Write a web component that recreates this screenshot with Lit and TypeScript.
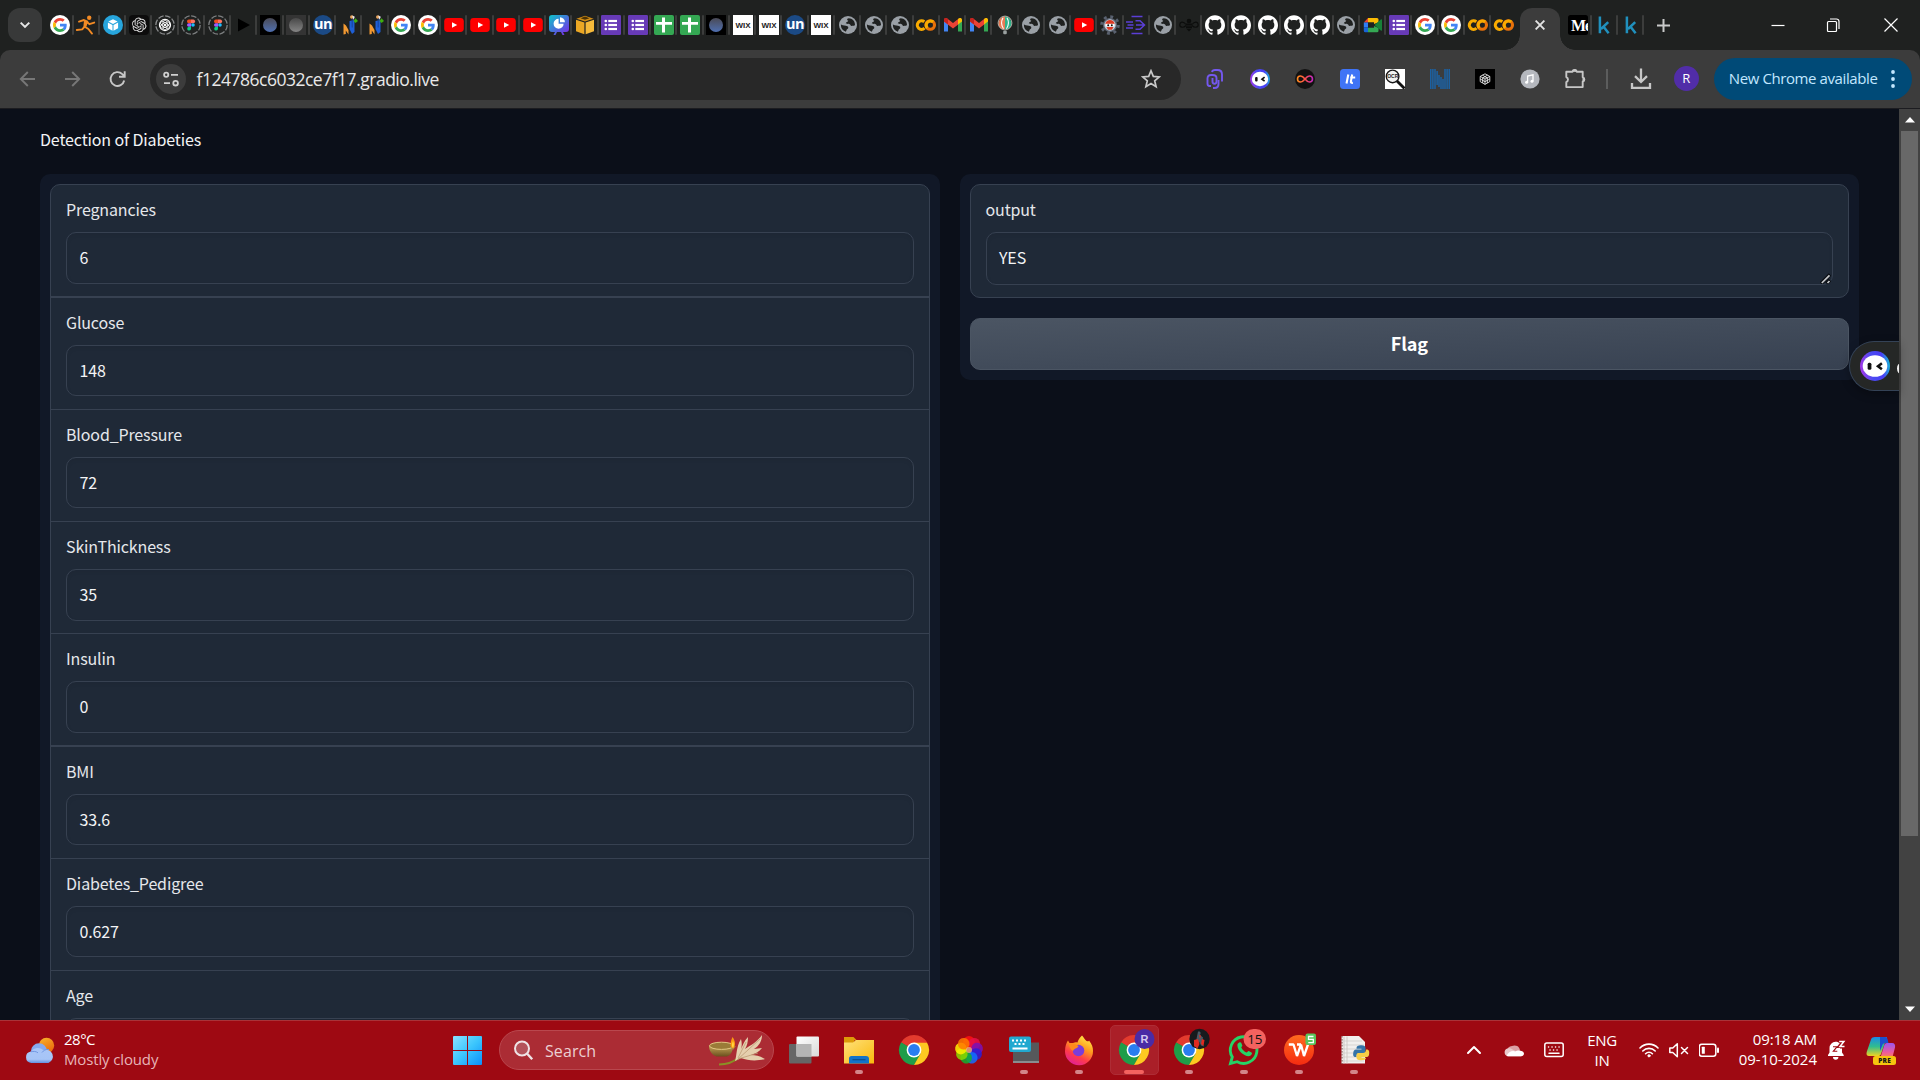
import { LitElement, html, svg, css, TemplateResult } from "lit";
import { customElement, property } from "lit/decorators.js";
import { classMap } from "lit/directives/class-map.js";

const OPENAI =
  "M22.2819 9.8211a5.9847 5.9847 0 0 0-.5157-4.9108 6.0462 6.0462 0 0 0-6.5098-2.9A6.0651 6.0651 0 0 0 4.9807 4.1818a5.9847 5.9847 0 0 0-3.9977 2.9 6.0462 6.0462 0 0 0 .7427 7.0966 5.98 5.98 0 0 0 .511 4.9107 6.051 6.051 0 0 0 6.5146 2.9001A5.9847 5.9847 0 0 0 13.2599 24a6.0557 6.0557 0 0 0 5.7718-4.2058 5.9894 5.9894 0 0 0 3.9977-2.9001 6.0557 6.0557 0 0 0-.7475-7.0729zm-9.022 12.6081a4.4755 4.4755 0 0 1-2.8764-1.0408l.1419-.0804 4.7783-2.7582a.7948.7948 0 0 0 .3927-.6813v-6.7369l2.02 1.1686a.071.071 0 0 1 .038.052v5.5826a4.504 4.504 0 0 1-4.4945 4.4944zm-9.6607-4.1254a4.4708 4.4708 0 0 1-.5346-3.0137l.142.0852 4.783 2.7582a.7712.7712 0 0 0 .7806 0l5.8428-3.3685v2.3324a.0804.0804 0 0 1-.0332.0615L9.74 19.9502a4.4992 4.4992 0 0 1-6.1408-1.6464zM2.3408 7.8956a4.485 4.485 0 0 1 2.3655-1.9728V11.6a.7664.7664 0 0 0 .3879.6765l5.8144 3.3543-2.0201 1.1685a.0757.0757 0 0 1-.071 0l-4.8303-2.7865A4.504 4.504 0 0 1 2.3408 7.872zm16.5963 3.8558L13.1038 8.364 15.1192 7.2a.0757.0757 0 0 1 .071 0l4.8303 2.7913a4.4944 4.4944 0 0 1-.6765 8.1042v-5.6772a.79.79 0 0 0-.407-.667zm2.0107-3.0231l-.142-.0852-4.7735-2.7818a.7759.7759 0 0 0-.7854 0L9.409 9.2297V6.8974a.0662.0662 0 0 1 .0284-.0615l4.8303-2.7866a4.4992 4.4992 0 0 1 6.6802 4.66zM8.3065 12.863l-2.02-1.1638a.0804.0804 0 0 1-.038-.0567V6.0742a4.4992 4.4992 0 0 1 7.3757-3.4537l-.142.0805L8.704 5.459a.7948.7948 0 0 0-.3927.6813zm1.0976-2.3654l2.602-1.4998 2.6069 1.4998v2.9994l-2.5974 1.4997-2.6067-1.4997Z";

const GITHUB =
  "M12 .297c-6.63 0-12 5.373-12 12 0 5.303 3.438 9.8 8.205 11.385.6.113.82-.258.82-.577 0-.285-.01-1.04-.015-2.04-3.338.724-4.042-1.61-4.042-1.61C4.422 18.07 3.633 17.7 3.633 17.7c-1.087-.744.084-.729.084-.729 1.205.084 1.838 1.236 1.838 1.236 1.07 1.835 2.809 1.305 3.495.998.108-.776.417-1.305.76-1.605-2.665-.3-5.466-1.332-5.466-5.93 0-1.31.465-2.38 1.235-3.22-.135-.303-.54-1.523.105-3.176 0 0 1.005-.322 3.3 1.23.96-.267 1.98-.399 3-.405 1.02.006 2.04.138 3 .405 2.28-1.552 3.285-1.23 3.285-1.23.645 1.653.24 2.873.12 3.176.765.84 1.23 1.91 1.23 3.22 0 4.61-2.805 5.625-5.475 5.92.42.36.81 1.096.81 2.22 0 1.606-.015 2.896-.015 3.286 0 .315.21.69.825.57C20.565 22.092 24 17.592 24 12.297c0-6.627-5.373-12-12-12";

const figma = svg`
  <circle cx="10" cy="10" r="9.2" fill="none" stroke="#7d7f80" stroke-width="1.3" stroke-dasharray="5.6 1.6"/>
  <path d="M7.8 4.6H10v3.6H7.8a1.8 1.8 0 0 1 0-3.6z" fill="#f24e1e"/>
  <path d="M10 4.6h2.3a1.8 1.8 0 0 1 0 3.6H10z" fill="#ff7262"/>
  <path d="M7.8 8.2H10v3.6H7.8a1.8 1.8 0 0 1 0-3.6z" fill="#a259ff"/>
  <circle cx="12" cy="10" r="1.8" fill="#1abcfe"/>
  <path d="M7.8 11.8H10v1.8a1.9 1.9 0 1 1-2.2-1.8z" fill="#0acf83"/>`;

const chromeBall = svg`
  <path d="M15 15 2 7.5A15 15 0 0 1 28 7.5z" fill="#e33b2e"/>
  <path d="M2 7.5A15 15 0 0 0 15 30l7-11z" fill="#1f9d49"/>
  <path d="M15 30A15 15 0 0 0 28 7.5H15l6.5 11.2z" fill="#fdc921"/>
  <path d="M2 7.5 8.5 18.8 15 15z" fill="#1f9d49"/>
  <path d="M15 7.5h13a15 15 0 0 0-2.2-3z" fill="#e33b2e"/>
  <circle cx="15" cy="15" r="7.4" fill="#fff"/>
  <circle cx="15" cy="15" r="5.9" fill="#2a7df0"/>`;

const botFace = svg`
  <defs>
    <linearGradient id="bot" x1="0" y1=".6" x2="1" y2=".5">
      <stop offset="0" stop-color="#a637e8"/><stop offset=".4" stop-color="#4a4bf2"/><stop offset=".75" stop-color="#4a3df5"/><stop offset="1" stop-color="#19b8dd"/>
    </linearGradient>
  </defs>
  <circle cx="10" cy="10" r="10" fill="url(#bot)"/>
  <ellipse cx="10" cy="10" rx="8.2" ry="7.2" fill="#fff"/>
  <rect x="5.1" y="7.9" width="2.5" height="4.6" rx="1" fill="#111"/>
  <path d="M14.6 8.2 12 10.2l2.6 2" fill="none" stroke="#111" stroke-width="1.7"/>`;

/* every favicon and extension glyph is drawn on a 20 x 20 board */
const glyphs: Record<string, TemplateResult> = {
  google: svg`<circle cx="10" cy="10" r="10" fill="#fff"/>
    <g transform="translate(3 3) scale(.2917)">
      <path fill="#EA4335" d="M24 9.5c3.54 0 6.71 1.22 9.21 3.6l6.85-6.85C35.9 2.38 30.47 0 24 0 14.62 0 6.51 5.38 2.56 13.22l7.98 6.19C12.43 13.72 17.74 9.5 24 9.5z"/>
      <path fill="#4285F4" d="M46.98 24.55c0-1.57-.15-3.09-.38-4.55H24v9.02h12.94c-.58 2.96-2.26 5.48-4.78 7.18l7.73 6c4.51-4.18 7.09-10.36 7.09-17.65z"/>
      <path fill="#FBBC05" d="M10.53 28.59c-.48-1.45-.76-2.99-.76-4.59s.27-3.14.76-4.59l-7.98-6.19C.92 16.46 0 20.12 0 24c0 3.88.92 7.54 2.56 10.78l7.97-6.19z"/>
      <path fill="#34A853" d="M24 48c6.48 0 11.93-2.13 15.89-5.81l-7.73-6c-2.15 1.45-4.92 2.3-8.16 2.3-6.26 0-11.57-4.22-13.47-9.91l-7.98 6.19C6.51 42.62 14.62 48 24 48z"/>
    </g>`,
  runner: svg`<circle cx="13.2" cy="2.8" r="2.2" fill="#f28a24"/>
    <path d="M3 6.6 8 5l3.4 1.6-2.6 5.2 3.6 2.2 3.6 4.6M11 6.8l2.4 2.4 4.8-1.6M8.6 11.6 6.2 14.4.8 15" fill="none" stroke="#f28a24" stroke-width="1.9" stroke-linecap="round" stroke-linejoin="round"/>
    <path d="m8 5.4 4 1.2-2.2 6.2-2.4-1.4z" fill="#f28a24"/>`,
  cube: svg`<circle cx="10" cy="10" r="10" fill="#27a5dc"/>
    <path d="m10 4.2 4.6 2.3L10 8.9 5.4 6.5z" fill="#fff"/><path d="M4.9 7.6 9.5 10v5.8L4.9 13.2zM15.1 7.6 10.5 10v5.8l4.6-2.6z" fill="#fff"/>`,
  openai: svg`<rect width="20" height="20" rx="4" fill="#0c0c0c"/><path transform="translate(2.8 2.6) scale(.61)" d=${OPENAI} fill="#dcdcdc"/>`,
  atom: svg`<circle cx="10" cy="10" r="9.2" fill="none" stroke="#8a8c8d" stroke-width="1.3" stroke-dasharray="5.6 1.6"/>
    <circle cx="10" cy="10" r="5.6" fill="#151515" stroke="#fff" stroke-width="1.1"/>
    <g fill="none" stroke="#fff" stroke-width=".9"><ellipse cx="10" cy="10" rx="5" ry="2.2" transform="rotate(30 10 10)"/><ellipse cx="10" cy="10" rx="5" ry="2.2" transform="rotate(90 10 10)"/><ellipse cx="10" cy="10" rx="5" ry="2.2" transform="rotate(150 10 10)"/></g>
    <circle cx="10" cy="10" r="1.2" fill="#fff"/>`,
  figma,
  play: svg`<path d="M4 3.500 16 10 4 16.500z" fill="#000"/>`,
  orbDark: svg`<defs><linearGradient id="orb" x2="0" y2="1"><stop stop-color="#4a4a55"/><stop offset="1" stop-color="#4f6fb0"/></linearGradient></defs>
    <rect width="20" height="20" fill="#000"/><circle cx="10" cy="10" r="7" fill="url(#orb)"/>`,
  orbGray: svg`<defs><linearGradient id="orbg" x2="0" y2="1"><stop stop-color="#484848"/><stop offset="1" stop-color="#858585"/></linearGradient></defs>
    <rect width="20" height="20" fill="#343434"/><circle cx="10" cy="10" r="7" fill="url(#orbg)"/>`,
  un: svg`<circle cx="10" cy="10" r="10" fill="#1b4a85"/><text class="un" x="10" y="13.8" text-anchor="middle">un</text>`,
  nn: svg`<path d="M4.5 8.5 7 10.500 9.500 15V19.500L6.800 15.500V19L4.500 19.500z" fill="#f39a32"/>
    <path d="M10.500 6 15.500 5v12l-2.500 2-2.500-5z" fill="#1e5fd6"/><path d="M13.200 3.500v9" stroke="#16439c" stroke-width="1"/>
    <circle cx="12.800" cy="2" r="1.800" fill="#e8a35c"/><path d="m13.200.6 2.600 1.200L14.500 5z" fill="#e9edf5"/><path d="m14.500 6 2-2.800L19 6l-2.500 2z" fill="#3fae10"/>`,
  youtube: svg`<rect x=".2" y="3" width="19.6" height="14" rx="3.4" fill="#fe0000"/><path d="m8 7.2 5.2 2.8L8 12.8z" fill="#fff"/>`,
  pie: svg`<defs><linearGradient id="pie" x2=".9" y2="1"><stop stop-color="#0cc5c9"/><stop offset="1" stop-color="#7a2ae8"/></linearGradient></defs>
    <path d="M3 0h14a3 3 0 0 1 3 3v11a3 3 0 0 1-3 3h-3l1.500 3h-2l-1.500-3H8l-1.500 3h-2L6 17H3a3 3 0 0 1-3-3V3a3 3 0 0 1 3-3z" fill="url(#pie)"/>
    <path d="M9.6 3.7a5 5 0 1 0 5 5h-5z" fill="#fff"/><path d="M11 2.200a5 5 0 0 1 4.900 5H11z" fill="#fff"/>`,
  box: svg`<path d="m10 .8 8.6 3L10 6.6 1.400 3.800z" fill="#d28d14"/><path d="M1 4.800 9.400 7.500v11.700L1 16.200z" fill="#eba724"/><path d="m19 4.800-8.400 2.700v11.700L19 16.200z" fill="#f5b93a"/><path d="m10 1.500 4.500 1.700L10 4.700 5.500 3.200z" fill="#4a3205"/>`,
  forms: svg`<rect width="20" height="20" rx="1.2" fill="#673ab7"/><g fill="#fff"><circle cx="4.8" cy="6" r="1.3"/><circle cx="4.8" cy="10" r="1.3"/><circle cx="4.8" cy="14" r="1.3"/><rect x="7.3" y="4.9" width="8.7" height="2.2"/><rect x="7.3" y="8.9" width="8.7" height="2.2"/><rect x="7.3" y="12.9" width="8.7" height="2.2"/></g>`,
  sheets: svg`<rect width="20" height="20" rx="2" fill="#34a853"/><path d="M8 2.500h3V7h7v2.800h-7v7.700H8V9.800H2V7h6z" fill="#fff"/>`,
  wix: svg`<rect width="20" height="20" fill="#fff"/><text class="wix" x="10" y="12.9" text-anchor="middle" textLength="15">WIX</text>`,
  globe: svg`<circle cx="10" cy="10" r="9" fill="#9aa0a6"/>
    <path d="M10.8 3.2c-2.500.2-1.600 2.300-.4 2.600-.6 1.200-2.400 1-2.600 2.800 1.600.8 4-.2 4.700 1.600.4 1.200 1.600.6 2.800.6 1 0 1.700-.2 1.700-1.600a7 7 0 0 0-6.200-6zM2.900 9.500a7.200 7.200 0 0 0 4.900 7.200c1-1 .4-2 1.600-2.600 1.200-.6 1.200-2.200 0-2.800C7.500 10.400 5.500 11 2.900 9.500z" fill="#1f2120"/>`,
  colab: svg`<g fill="none" stroke-width="3.1"><path d="M8.300 6.700a4.300 4.300 0 1 0 .2 6.500" stroke="#f9ab00"/><circle cx="14.200" cy="10" r="4.300" stroke="#e8710a"/><path d="M11.200 13a4.300 4.300 0 0 1 6-6.100" stroke="#f9ab00"/></g>`,
  gmail: svg`<path d="M1 5v11.500h4V9z" fill="#4285f4"/><path d="M15 9v7.500h4V5z" fill="#34a853"/><path d="M1 6.500V4.600C1 3 3 2.500 4.200 3.400L10 8l5.800-4.600V9L10 13.400z" fill="#ea4335"/><path d="m1 6.500 4 3.100V4L3.800 3.200C2.600 2.700 1 3.200 1 4.700z" fill="#c5221f"/><path d="m15 9.600 4-3.100V4.700c0-1.600-1.800-2.200-3-1.400L15 4z" fill="#fbbc04"/>`,
  balloon: svg`<path d="M10 1.500a6.700 6.700 0 0 0-3 12.500h3z" fill="#e97a54"/><path d="M10 1.500a6.700 6.700 0 0 1 3 12.500h-3z" fill="#2fb28a"/><path d="M8 2.800c-2 3.500-1.500 8 .5 11M12 2.800c2 3.500 1.500 8-.5 11" stroke="#fff" fill="none" stroke-width="1.1"/><circle cx="10" cy="8" r="6.900" fill="none" stroke="#d7d2c5" stroke-width=".8"/><rect x="8.200" y="15.500" width="3.600" height="3.800" rx="1.200" fill="#9aa1a0"/>`,
  gear: svg`<circle cx="10" cy="10" r="8.4" fill="none" stroke="#59616f" stroke-width="2.800" stroke-dasharray="2.900 3.700"/><circle cx="10" cy="10" r="6.400" fill="#c3ccd8" stroke="#59616f" stroke-width="1.400"/><path d="M5.500 8c1.500-4 7.500-4 9 0v1.500h-9zM6.500 12h7l-1.500 2.700H8z" fill="#dd3a24"/><path d="M5.500 8.800h9v2.700h-9z" fill="#fff"/><circle cx="8.200" cy="10.200" r="1" fill="#111"/><circle cx="11.800" cy="10.200" r="1" fill="#111"/>`,
  motion: svg`<g fill="none" stroke="#5b3fd6" stroke-width="1.5"><path d="M5.500 1.500h11M5.500 18.500h11M0 7h7M1.500 10h6M0 13h7M9.500 5.800H14l4.500 4.200-4.500 4.200H9.500M10 10h8"/></g>`,
  bee: svg`<g fill="none" stroke="#0c0d0c" stroke-width="1.2"><path d="M7 9.500C4 5.500.8 7 .8 9.800c0 3 3.700 3.200 6.200.7M13 9.500c3-4 6.200-2.500 6.200.3 0 3-3.700 3.200-6.200.7"/></g><g fill="#0c0d0c"><circle cx="10" cy="6" r="2.300"/><rect x="7" y="8.500" width="6" height="2"/><rect x="7" y="11.300" width="6" height="2"/><path d="M7.700 14h4.600L10 16.500z"/></g>`,
  github: svg`<path transform="scale(.8333)" d=${GITHUB} fill="#fff"/>`,
  meet: svg`<path d="M5 3v4.500H.8z" fill="#ea4335"/><path d="M5 3h9a1.500 1.500 0 0 1 1.500 1.500V7.200L11 9V7.300H5z" fill="#fbbc04"/><path d="M.8 7.500H5v5H.8z" fill="#2f7df6"/><path d="M.8 12.500H5v4.800H2.500A1.600 1.600 0 0 1 .8 15.800z" fill="#1765d8"/><path d="M5 12.700h6V11l4.500 2v2.800a1.500 1.500 0 0 1-1.500 1.500H5z" fill="#34a853"/><path d="m11.500 10 6.300-5.500c.6-.4 1.200-.2 1.200.5v10c0 .8-.6.9-1.200.5z" fill="#188038"/>`,
  medium: svg`<defs><clipPath id="mclip"><rect width="20" height="20" rx="2.5"/></clipPath></defs><g clip-path="url(#mclip)"><rect width="20" height="20" fill="#000"/><text class="medium" x="3" y="15.8">Me</text></g>`,
  kaggle: svg`<path d="M5.900 1.500v16.700M14.200 7.200 7 14M9.600 11.800l5 6.400" fill="none" stroke="#2090bd" stroke-width="2.5"/>`,
  clip: svg`<g fill="none" stroke="#7458ee" stroke-width="1.900"><path d="M6 17H4.500C3 17 2.500 16 2.500 14.500v-5C2.500 7 4 6 6 6h1.500c3 0 4 1 4 3v3.500c0 1.700-.8 2.200-2 2.200s-2-.6-2-2.200V9"/><path d="M7 3c.3-1.500 1-2 3-2h2.500C15.500 1 17 2.500 17 5.500v7M13.500 11v4c0 2.500-1.500 4-4 4H8"/></g>`,
  bot: botFace,
  infinity: svg`<defs><linearGradient id="inf"><stop stop-color="#ff8a1f"/><stop offset=".5" stop-color="#ff4f4a"/><stop offset="1" stop-color="#c327c0"/></linearGradient></defs><circle cx="10" cy="10" r="10" fill="#121212"/><path d="M10 10C8 7.500 7 7 5.500 7a3 3 0 0 0 0 6C7 13 8 12.500 10 10s3-3 4.500-3a3 3 0 0 1 0 6C13 13 12 12.500 10 10z" fill="none" stroke="url(#inf)" stroke-width="1.6"/>`,
  lt: svg`<rect width="20" height="20" rx="3.5" fill="#3f74f6"/><path d="M8.300 5.500 6.500 14.500M12.200 5.500l-1.300 6.800c-.2 1.400.5 1.700 2 1.500M10.200 8.500h5" fill="none" stroke="#fff" stroke-width="2.1"/>`,
  ocr: svg`<rect width="20" height="20" fill="#fff"/><circle cx="7.600" cy="7.400" r="6.300" fill="#f1f1f1" stroke="#161616" stroke-width="1.4"/><path d="m12 12 7.500 7.500" stroke="#111" stroke-width="2.8"/><text class="ocr" x="7.700" y="9.200" text-anchor="middle">OCR</text>`,
  nm: svg`<g stroke="#1668b5" stroke-width="1.3"><path d="M.8 0v20M2.900 0v20M5 0v20M15 0v20M17.100 0v20M19.200 0v20M7.100 2v14M9 6v12M11 8v12M13 10v10"/></g>`,
  cubes: svg`<rect width="20" height="20" fill="#000"/><g fill="none" stroke="#fff" stroke-width=".8"><path d="m10 4.800 4.800 2.600v5.200L10 15.400l-4.800-2.800V7.400zM5.200 7.400 10 10l4.800-2.600M10 10v5.400M7.500 6.200 12.300 9v5M12.500 6.200 7.700 9v5M5.200 10 10 12.600l4.800-2.600"/></g>`,
  music: svg`<circle cx="10" cy="10" r="9.6" fill="#b5b8be"/><path d="M7.600 13.200V7l5.400-1.200V12" fill="none" stroke="#fff" stroke-width="1.3"/><circle cx="6.600" cy="13.300" r="1.500" fill="#fff"/><circle cx="12" cy="12.200" r="1.500" fill="#fff"/>`,
  puzzle: svg`<path d="M1.300 2.700h6.200a2.200 2.200 0 0 1 4.300 0h5.900v5.500a2.300 2.300 0 0 1 0 4.400v5.500H1.300v-5a2.700 2.700 0 0 0 0-5z" fill="none" stroke="#c7c7c7" stroke-width="1.9" stroke-linejoin="round"/><path d="M7.600 2.300a2.100 2.100 0 0 1 4.100 0zM18 8.300a2.200 2.200 0 0 1 0 4.200z" fill="#c7c7c7" stroke="#c7c7c7"/>`,
};

const rep = (n: number, name: string) => Array<string>(n).fill(name);
const tabs = [
  "google", "runner", "cube", "openai", "atom", "figma", "figma", "play", "orbDark", "orbGray", "un", "nn", "nn",
  "google", "google", ...rep(4, "youtube"), "pie", "box", "forms", "forms", "sheets", "sheets", "orbDark",
  "wix", "wix", "un", "wix", ...rep(3, "globe"), "colab", "gmail", "gmail", "balloon", "globe", "globe", "youtube",
  "gear", "motion", "globe", "bee", ...rep(5, "github"), "globe", "meet", "forms", "google", "google", "colab", "colab",
];
const tabsAfter = ["medium", "kaggle", "kaggle"];
const extensions = ["clip", "bot", "infinity", "lt", "ocr", "nm", "cubes", "music", "puzzle"];

const icon = (name: string) => html`<svg class="glyph" viewBox="0 0 20 20">${glyphs[name]}</svg>`;

const glyphStyles = css`
  .glyph { display: block; width: 20px; height: 20px; flex: none; overflow: visible; }
  .un { font: 700 14.5px "Open Sans", sans-serif; fill: #fff; letter-spacing: -0.6px; }
  .wix { font: 700 8px "Liberation Sans", sans-serif; fill: #222; }
  .medium { font: 700 16px "Liberation Serif", serif; fill: #fff; letter-spacing: -1px; }
  .ocr { font: 700 5px "Liberation Sans", sans-serif; fill: #222; }
`;

@customElement("tab-strip")
class TabStrip extends LitElement {
  static styles = [glyphStyles, css`
    :host { display: flex; height: 50px; background: #1f2120; align-items: stretch; padding-left: 8px; box-sizing: border-box; }
    .menu { width: 34px; height: 34px; margin: 8px 8px 0 0; border-radius: 12px; background: #383939; display: grid; place-items: center; }
    .tabs { display: flex; align-items: center; }
    .tab { display: flex; align-items: center; width: 26.25px; height: 50px; }
    .tab::after { content: ""; width: 2px; height: 20px; margin-left: 1.5px; background: #3c3d3c; border-radius: 1px; }
    .last::after { visibility: hidden; }
    .active { position: relative; width: 40px; height: 42.5px; margin: 7.5px 8px 0 0; border-radius: 12px 12px 0 0; background: #3c3c3c; display: grid; place-items: center; padding-bottom: 7px; box-sizing: border-box; }
    .active::before, .active::after { content: ""; position: absolute; bottom: 0; width: 15px; height: 15px; }
    .active::before { right: 100%; background: radial-gradient(circle at 0 0, transparent 14.5px, #3c3c3c 15px); }
    .active::after { left: 100%; background: radial-gradient(circle at 100% 0, transparent 14.5px, #3c3c3c 15px); }
    .plus { margin: 18.5px 0 0 10px; width: 13px; height: 13px; }
    .controls { display: flex; margin-left: auto; align-items: center; height: 49px; }
    .controls svg { width: 58px; height: 14px; }
  `];
  render() {
    return html`
      <div class="menu"><svg width="12" height="12" viewBox="0 0 12 12"><path d="m1.700 3.600 4.300 4.300 4.300-4.300" fill="none" stroke="#e6e6e6" stroke-width="2"/></svg></div>
      <div class="tabs">${tabs.map((t, i) => html`<div class=${classMap({ tab: true, last: i === tabs.length - 1 })}>${icon(t)}</div>`)}</div>
      <div class="active"><svg width="10" height="10" viewBox="0 0 10 10"><path d="m.6.6 8.800 8.800M9.400.6.6 9.400" stroke="#e3e3e3" stroke-width="1.9"/></svg></div>
      <div class="tabs">${tabsAfter.map((t) => html`<div class="tab">${icon(t)}</div>`)}</div>
      <svg class="plus" viewBox="0 0 13 13"><path d="M6.500 0v13M0 6.500h13" stroke="#c9caca" stroke-width="2"/></svg>
      <div class="controls">
        <svg viewBox="0 0 58 14"><path d="M25.500 7.500h13" stroke="#fff" stroke-width="1.2"/></svg>
        <svg viewBox="0 0 58 14"><path d="M23.500 4.500a1 1 0 0 1 1-1h7a1 1 0 0 1 1 1v8a1 1 0 0 1-1 1h-7a1 1 0 0 1-1-1zM26 1h6.500a2.500 2.500 0 0 1 2.500 2.500V11" fill="none" stroke="#fff" stroke-width="1.2"/></svg>
        <svg viewBox="0 0 58 14"><path d="m22.500.5 13 13m0-13-13 13" stroke="#fff" stroke-width="1.2"/></svg>
      </div>`;
  }
}

@customElement("browser-toolbar")
class BrowserToolbar extends LitElement {
  static styles = [glyphStyles, css`
    :host { display: block; background: #1f2120; font-family: "Open Sans", "Noto Sans", sans-serif; }
    .bar { display: flex; align-items: center; height: 59px; box-sizing: border-box; padding: 0 8.5px 1px 17px; background: #3c3c3c; border-bottom: 1px solid #1c1c20; border-radius: 10px 10px 0 0; }
    .nav { display: flex; gap: 25px; width: 133px; }
    .nav svg { width: 20px; height: 20px; flex: none; }
    .omnibox { display: flex; align-items: center; width: 1031px; height: 42px; border-radius: 21px; background: #282828; box-sizing: border-box; padding: 0 20px 0 6px; }
    .site { width: 30px; height: 30px; border-radius: 50%; background: #3c3c3c; display: grid; place-items: center; margin-right: 10.5px; }
    .url { font-size: 17.5px; line-height: 26px; color: #e8e8e8; letter-spacing: -0.49px; flex: 1; }
    .ext { display: flex; gap: 25.1px; margin-left: 23.5px; }
    .rule { width: 2px; height: 20px; background: #5c5d5d; margin: 0 22px 0 21px; }
    .avatar { width: 25px; height: 25px; border-radius: 50%; background: #512da8; color: #fff; display: grid; place-items: center; font-size: 13px; margin: -1px 15px 0 21.5px; }
    .update { display: flex; align-items: center; justify-content: space-between; flex: 1; height: 42px; border-radius: 21px; background: #004a77; color: #c2e7ff; font-size: 15px; letter-spacing: -0.4px; padding: 0 17px 0 15px; box-sizing: border-box; white-space: nowrap; }
    .update span { margin-top: -2px; }
  `];
  render() {
    return html`<div class="bar">
      <div class="nav">
        <svg viewBox="0 0 20 20"><path d="M18 10H4.500M10.800 3 3.800 10l7 7" fill="none" stroke="#777" stroke-width="1.9"/></svg>
        <svg viewBox="0 0 20 20"><path d="M3 10h13.500M10.200 3l7 7-7 7" fill="none" stroke="#777" stroke-width="1.9"/></svg>
        <svg viewBox="0 0 20 20"><path d="M17.200 11.500a6.900 6.900 0 1 1-1.900-6.400l2.200 2.100M17.700 2.200v5.600H12" fill="none" stroke="#c8c8c8" stroke-width="1.9"/></svg>
      </div>
      <div class="omnibox">
        <div class="site"><svg width="18" height="18" viewBox="0 0 18 18" fill="none" stroke="#d0d0d0" stroke-width="1.8"><circle cx="4.200" cy="4.800" r="2.100"/><path d="M9 4.800h7M2 13.200h6"/><circle cx="13.600" cy="13.200" r="2.300"/></svg></div>
        <span class="url">f124786c6032ce7f17.gradio.live</span>
        <svg width="20" height="20" viewBox="0 0 20 20"><path d="m10 1.800 2.300 5.600 6 .5-4.600 3.900 1.400 5.900-5.100-3.200-5.100 3.200 1.400-5.900L1.700 7.900l6-.5z" fill="none" stroke="#c9c9c9" stroke-width="1.7"/></svg>
      </div>
      <div class="ext">${extensions.map(icon)}</div>
      <div class="rule"></div>
      <svg width="22" height="22" viewBox="0 0 22 22"><path d="M11 .5v13M5 8.200l6 5.800 6-5.800M2 15v4.800h18V15" fill="none" stroke="#c7c7c7" stroke-width="2.3"/></svg>
      <div class="avatar">R</div>
      <div class="update"><span>New Chrome available</span><svg width="4" height="20" viewBox="0 0 4 20" fill="#c2e7ff"><circle cx="2" cy="3" r="1.9"/><circle cx="2" cy="10" r="1.9"/><circle cx="2" cy="17" r="1.9"/></svg></div>
    </div>`;
  }
}

interface Field { label: string; value: string; line: number; box: number; }
const fields: Field[] = [
  { label: "Pregnancies", value: "6", line: 2, box: 52 },
  { label: "Glucose", value: "148", line: 1, box: 51 },
  { label: "Blood_Pressure", value: "72", line: 1, box: 51 },
  { label: "SkinThickness", value: "35", line: 1, box: 52 },
  { label: "Insulin", value: "0", line: 2, box: 52 },
  { label: "BMI", value: "33.6", line: 1, box: 51 },
  { label: "Diabetes_Pedigree", value: "0.627", line: 1, box: 51 },
  { label: "Age", value: "", line: 1, box: 51 },
];

@customElement("gradio-page")
class GradioPage extends LitElement {
  static styles = [glyphStyles, css`
    :host { display: flex; min-height: 0; background: #0b0f19; color: #f3f4f6; font-family: "Noto Sans CJK SC", "Noto Sans", sans-serif; font-size: 16px; letter-spacing: -0.14px; overflow: hidden; position: relative; }
    .content { flex: 1; padding: 18px 40px 0; min-width: 0; }
    .title { height: 24px; line-height: 24px; margin-bottom: 23px; }
    .columns { display: flex; gap: 20px; align-items: flex-start; }
    .panel { flex: 1 1 0; min-width: 0; background: #111827; border-radius: 10px; padding: 10px; box-sizing: border-box; }
    .group { border: 1px solid #374151; border-radius: 10px; background: #1f2937; overflow: hidden; }
    .field { height: 99px; padding: 12px 15px 0; border-bottom: 0 solid #374151; }
    .label { height: 24px; line-height: 24px; color: #e5e7eb; margin-bottom: 11px; }
    .input { border: 1px solid #374151; border-radius: 10px; box-sizing: border-box; padding: 0 13px 0 12.5px; line-height: 48px; box-shadow: inset 0 2px 4px rgba(0,0,0,.05); }
    .text { position: relative; height: 53px; }
    .grip { position: absolute; right: 1px; bottom: 0; }
    .output .field { height: 100px; }
    .flag { display: block; width: 100%; height: 52px; margin-top: 20px; border: 1px solid #4b5563; border-radius: 10px; background: linear-gradient(to bottom right, #4b5563, #374151); color: #fff; font: 700 18px "Noto Sans CJK SC", sans-serif; letter-spacing: -0.15px; padding: 0 0 2px; line-height: 48px; }
    .scroll { width: 21px; background: #424242; display: flex; flex-direction: column; align-items: center; box-sizing: border-box; justify-content: space-between; }
    .arrow { height: 22px; display: grid; place-items: center; }
    .thumb { width: 17px; height: 705px; background: #686868; margin-right: 1px; margin-bottom: auto; }
    .widget { position: absolute; right: 21px; top: 232px; width: 50px; height: 50px; box-sizing: border-box; border: 1px solid #344256; border-right: 0; border-radius: 25px 0 0 25px; background: #252726; display: flex; align-items: center; padding-left: 10px; overflow: hidden; color: #fff; box-shadow: 0 3px 10px rgba(0,0,0,.3); }
    .widget .glyph { width: 30px; height: 30px; }
    .dot { flex: none; width: 8px; height: 11px; box-sizing: border-box; border: 2px solid #eee; border-radius: 50%; margin: 4px 0 0 7px; }
  `];
  render() {
    return html`
      <div class="content">
        <div class="title">Detection of Diabeties</div>
        <div class="columns">
          <div class="panel"><div class="group">${fields.map((f) => html`
            <div class="field" style="border-bottom-width:${f.line}px">
              <div class="label">${f.label}</div>
              <div class="input" style="height:${f.box}px">${f.value}</div>
            </div>`)}</div></div>
          <div class="panel output">
            <div class="group"><div class="field">
              <div class="label">output</div>
              <div class="input text">YES<svg class="grip" width="11" height="11" viewBox="0 0 11 11"><path d="M1 10.500 10 1.500M6.500 10.500 10 7" stroke="#0a0d12" stroke-width="3.6"/><path d="m1.800 10 7.700-7.700M7.500 10l2-2" stroke="#c6c8cb" stroke-width="1.7"/></svg></div>
            </div></div>
            <button class="flag">Flag</button>
          </div>
        </div>
      </div>
      <div class="scroll">
        <div class="arrow"><svg width="10" height="6" viewBox="0 0 10 6"><path d="M5 0 10 5.500H0z" fill="#fff"/></svg></div>
        <div class="thumb"></div>
        <div class="arrow"><svg width="10" height="6" viewBox="0 0 10 6"><path d="M5 6 0 .5h10z" fill="#fff"/></svg></div>
      </div>
      <div class="widget">${icon("bot")}<span class="dot"></span></div>`;
  }
}

const petals = ["#ff1212", "#e8104a", "#7a10b8", "#2a1fd8", "#1070ff", "#10b030", "#8ad800", "#fff000", "#ff7a00"];

/* taskbar artwork uses a 30 x 30 board */
const apps: { art: TemplateResult; state: string }[] = [
  { state: "", art: svg`<defs><linearGradient id="tv" x2="1" y2="1"><stop stop-color="#fff"/><stop offset="1" stop-color="#d9d9d9"/></linearGradient></defs><rect x="0" y="9" width="22.5" height="19.5" rx="1" fill="#666"/><rect x="7.5" y="1.5" width="22.5" height="20" rx="1" fill="url(#tv)"/><path d="M7.500 9h15v12.500h-15z" fill="#b5b5b5"/>` },
  { state: "run", art: svg`<defs><linearGradient id="fo" x2="1" y2="1"><stop stop-color="#ffe17a"/><stop offset="1" stop-color="#f9b90d"/></linearGradient></defs><path d="M0 2h9.500L13 5.500h-3V9H0z" fill="#dd9a09"/><path d="M0 7.500h9L12 5h18v23.500H0z" fill="url(#fo)"/><path d="M7.500 21H22a3 3 0 0 1 3 3v4.500H5V23.500A2.500 2.500 0 0 1 7.500 21z" fill="#1273c8"/><path d="M8.500 24.700h13" stroke="#0b4d8d" stroke-width="1.2"/>` },
  { state: "", art: chromeBall },
  { state: "", art: svg`${petals.map((c, i) => svg`<circle cx="15" cy="6.800" r="5.800" fill=${c} opacity=".85" transform=${`rotate(${i * 40} 15 15)`}/>`)}<circle cx="15" cy="15" r="3" fill="#ffe9b0" opacity=".6"/>` },
  { state: "run", art: svg`<rect x="4" y="7.500" width="26" height="20.500" fill="#56585b"/><path d="M4 26h26v2H4z" fill="#8a8c8f"/><rect x="0" y="1.500" width="22" height="15.500" rx="2" fill="#22a9d0"/><g fill="#fff"><path d="M3 4.500h2v2H3zM7 4.500h2v2H7zM11 4.500h2v2h-2zM15 4.500h2v2h-2zM5.500 8h2v2h-2zM9.500 8h2v2h-2zM13.500 8h2v2h-2zM3.500 12.500H18.500v2H3.500z"/></g>` },
  { state: "run", art: svg`<defs><linearGradient id="ff" x1=".8" y1="0" x2=".3" y2="1"><stop stop-color="#fff04a"/><stop offset=".4" stop-color="#ff9a1e"/><stop offset=".7" stop-color="#ff3b4a"/><stop offset="1" stop-color="#e01f9a"/></linearGradient></defs><path d="M18 .5c2 2 2.500 4 4.500 5.500C25 7 25 5.500 25 5.500c3 4 4 6.500 4 10.500a14 14 0 0 1-28 .5C1 11 2.500 7.500 4 5.500L5.500 8h3.500c2-1 3-1 4.500-.5C14 5 15.500 3 18 .5z" fill="url(#ff)"/><circle cx="14.500" cy="15.500" r="5.800" fill="#7a3ddb"/><path d="M5 9c4-1 6 0 9.500 2-1 2.500-4 2-5.500 5-2.500-1.500-4-4-4-7z" fill="#ff8a1c"/>` },
  { state: "active", art: svg`${chromeBall}<circle cx="25.500" cy="4" r="10" fill="#4a2ba5"/><text class="badge-r" x="25.500" y="8" text-anchor="middle">R</text>` },
  { state: "run", art: svg`${chromeBall}<circle cx="25.500" cy="4" r="10.200" fill="#171a1d"/><path d="M24-3.500c3-.5 3 2 2 3.500l3 2.500-1 6 2 3-3-1-2-4-2 4-3 1 2-5 1-5z" fill="#4a5965"/><path d="m20 5 4-1 1.500 5-2 4.500-3.500-2.500zM28 4l2.500 1-1 6-2.500-2zM25 0l2 .5-1 3.500z" fill="#e02b20"/>` },
  { state: "run", art: svg`<path d="M3.300 22a13.300 13.300 0 1 1 4.900 4.700L1.500 28.500z" fill="none" stroke="#25d366" stroke-width="2.9"/><path d="M10.300 7.600c.8-.6 1.700-.3 2 .5l1 2.500c.2.7-1 1.500-1 2 1.200 2.500 3 4 5.200 5 .8 0 1.400-1.700 2.200-1.500l2.800 1.400c1 .6.2 2.300-.8 3-2.500 1.700-6.300-.2-8.900-2.300-2.500-2.200-4.600-5.500-4.400-8.300 0-.8.8-1.600 1.900-2.300z" fill="#25d366"/><rect x="14.500" y="-6" width="22.5" height="20" rx="10" fill="#f4625f"/><text class="badge-n" x="25.700" y="9" text-anchor="middle">15</text>` },
  { state: "run", art: svg`<defs><linearGradient id="wp" x2="0" y2="1"><stop stop-color="#ff6a1f"/><stop offset="1" stop-color="#f52b10"/></linearGradient></defs><circle cx="15" cy="15" r="15" fill="url(#wp)"/><path d="M4.800 9.500h4.700l3.500 11.500L17 9.500 20 21l4-11.500M13 9.500h4" fill="none" stroke="#fff" stroke-width="2.300" stroke-linejoin="bevel"/><rect x="21.500" y="-1.500" width="10.500" height="11.500" rx="2" fill="#58c45c"/><path d="M29.500 1.500H24.500v2.900h4.800v3.200h-5" fill="none" stroke="#fff" stroke-width="1.300"/>` },
  { state: "run", art: svg`<path d="M2.500 1H20l6 6v21.500H2.500z" fill="#f2f0ee"/><path d="M5 1.500v27M8 1.500v27" stroke="#c9c2bd" stroke-width=".8"/><path d="M3 6h20M3 10h22M3 14h22M3 18h22M3 22h22M3 26h22" stroke="#cdc8c4" stroke-width=".7"/><path d="M3 1v28" stroke="#7a4a48" stroke-width="1" stroke-dasharray="1.500 1.500"/><path d="M20 10.500c4-.8 6.500 0 6.500 2.500v3.500c0 1.500-1 2-2.500 2h-4c-2 0-2.500 1.500-2.500 3.500-4 .5-3.500-3-3-5.500.5-1.800 2-2 4-2h4v-.8h-5c0-1.500 0-2.700 2.500-3.200z" fill="#3574a8"/><path d="M24 25c-4 .8-6.500 0-6.500-2.500V20c0-1.500 1-2 2.500-2h4c2 0 3-1.500 3-3.500 3.500-.3 3.500 2.500 3 5.500-.5 1.800-1.500 2-3.500 2h-4v.8h4.500c0 1.200-.5 2-3 2.200z" fill="#f7ce46"/>` },
];

@customElement("task-bar")
class TaskBar extends LitElement {
  @property() clock = "09:18 AM";
  static styles = css`
    :host { display: flex; align-items: center; height: 60px; box-sizing: border-box; background: #9e0912; border-top: 1px solid #a93339; font-family: "Open Sans", "Noto Sans", sans-serif; font-size: 15px; line-height: 20px; color: #fff; padding: 0 24px 1px 25px; white-space: nowrap; }
    .weather { display: flex; align-items: center; width: 428px; gap: 9px; }
    .stack { margin-top: -2px; }
    .sub { color: #e7b4b7; letter-spacing: -0.14px; }
    .temp { letter-spacing: -0.5px; }
    .start { width: 29px; height: 29px; margin-right: 17px; }
    .search { display: flex; align-items: center; width: 275px; height: 40px; box-sizing: border-box; border: 1px solid #b9474e; border-radius: 20px; background: #ab2c34; padding: 0 8px 0 14px; margin-right: 2.5px; color: #ecd0d2; font-size: 16px; }
    .search span { flex: 1; margin: 2px 0 0 10px; letter-spacing: 0.1px; }
    .diya { overflow: visible; }
    .app { position: relative; width: 55px; height: 50px; display: grid; place-items: center; box-sizing: border-box; }
    .app svg { width: 30px; height: 30px; overflow: visible; z-index: 1; }
    .app::after { content: ""; position: absolute; bottom: 1px; left: 23.5px; width: 8px; height: 4px; border-radius: 2px; background: #d48489; display: none; }
    .run::after, .active::after { display: block; }
    .active::after { width: 20px; left: 17.5px; background: #f4625f; }
    .active::before { content: ""; position: absolute; inset: 0 3px; border: 1px solid #ae2c35; border-radius: 5px; background: #aa1f28; box-sizing: border-box; }
    .badge-r { font: 700 11px "Liberation Sans", sans-serif; fill: #d5c8ef; }
    .badge-n { font: 13.5px "Open Sans", sans-serif; fill: #111; letter-spacing: -0.3px; }
    .pre { font: 800 6.5px "Open Sans", sans-serif; fill: #171717; letter-spacing: 0.3px; }
    .tray { display: flex; align-items: center; margin-left: auto; }
    .cell { width: 40px; display: grid; place-items: center; }
    .cell svg { width: 20px; height: 20px; }
    .narrow { width: 30px; }
    .lang { width: 56px; margin-right: 4px; text-align: center; letter-spacing: -0.3px; }
    .clock { width: 93px; text-align: right; letter-spacing: 0; margin: -2px 4px 0 0; }
    .time { letter-spacing: -0.1px; }
    .copilot { width: 30px; height: 30px; margin-left: 15px; }
  `;
  render() {
    const line = (body: TemplateResult, w = "1.6") => html`<svg viewBox="0 0 20 20" fill="none" stroke="#fff" stroke-width=${w} stroke-linecap="round" stroke-linejoin="round">${body}</svg>`;
    return html`
      <div class="weather">
        <svg width="30" height="30" viewBox="0 0 30 30"><defs><linearGradient id="cl" x2="0" y2="1"><stop stop-color="#a9c6f8"/><stop offset=".75" stop-color="#a6c4f6"/><stop offset="1" stop-color="#6290e2"/></linearGradient><linearGradient id="sun" x2=".5" y2="1"><stop stop-color="#f8b62d"/><stop offset="1" stop-color="#ec6b0d"/></linearGradient></defs><circle cx="21.500" cy="10.500" r="7.700" fill="url(#sun)"/><circle cx="14" cy="16.500" r="8.200" fill="#86aaf0"/><path d="M6 16.500a8.500 8.500 0 0 1 12.500-1.300 6.700 6.700 0 1 1 5 12.800H6.200a5.800 5.800 0 0 1-.2-11.500z" fill="url(#cl)"/><path d="M13 17.800c-2-1.600-4.500-1.600-7-1M17 17.500c1.500-2 3.500-3.500 7-3" stroke="#7198e2" fill="none"/></svg>
        <div class="stack"><div class="temp">28°C</div><div class="sub">Mostly cloudy</div></div>
      </div>
      <svg class="start" viewBox="0 0 29 29"><defs><linearGradient id="win" gradientUnits="userSpaceOnUse" x1="0" y1="0" x2="29" y2="29"><stop stop-color="#8be3ff"/><stop offset=".5" stop-color="#3cc6fd"/><stop offset="1" stop-color="#0b8ffb"/></linearGradient></defs><path d="M0 1a1 1 0 0 1 1-1h13v14H0zM15 0h13a1 1 0 0 1 1 1v13H15zM0 15h14v14H1a1 1 0 0 1-1-1zM15 15h14v13a1 1 0 0 1-1 1H15z" fill="url(#win)"/></svg>
      <div class="search">
        <svg width="21" height="21" viewBox="0 0 21 21"><circle cx="8" cy="8.500" r="7" fill="#b4525a" stroke="#efe3e5" stroke-width="2"/><path d="m13.200 13.700 5 5.500" stroke="#efe3e5" stroke-width="2.4"/></svg>
        <span>Search</span>
        <svg class="diya" width="56" height="30" viewBox="0 0 56 30"><defs><linearGradient id="bowl" x2="0" y2="1"><stop stop-color="#c3a458"/><stop offset="1" stop-color="#6b4f1d"/></linearGradient></defs><path d="M0 11c7 4 16 4 24 0 0 5-2 9-6 10.500H7.500C3 20 0 16 0 11z" fill="url(#bowl)"/><ellipse cx="12.500" cy="10.800" rx="12" ry="3.600" fill="#9a7c38" stroke="#e2c983"/><path d="m22 12 5-1-3 4z" fill="#a98541"/><path d="M23.500 2c3 4 3.500 9 .5 11.500-3.500-1.500-3-6-.5-11.500z" fill="#fb9a10"/><path d="M24 6c1 3 1 5 0 7-1.500-2-1-4 0-7z" fill="#ffe34a"/><path d="M10 29.500c8 0 14-2 20-7" fill="none" stroke="#8a8f25" stroke-width="2.2"/><path d="M26 26c2-6 1-14 6-22 1 4 1 7 0 10 2-4 3-8 7-12 0 5-1 9-3 12C42 10 48 7 53 0c0 6-3 11-8 14 3 0 5-1 8-1-3 4-8 6-11 7 5 0 9 1 14 4-7 2-17 2-24-1z" fill="#e5cfae"/><path d="M28 25 51 4M29 23l8-16M29 24l20-6" stroke="#bb9a74" stroke-width=".8"/></svg>
      </div>
      ${apps.map((a) => html`<div class=${"app " + a.state}><svg viewBox="0 0 30 30">${a.art}</svg></div>`)}
      <div class="tray">
        <div class="cell">${line(svg`<path d="m4 13 6-6 6 6"/>`, "2")}</div>
        <div class="cell"><svg viewBox="0 0 20 20"><path d="M3 11a5.500 5.500 0 0 1 5-5 5.500 5.500 0 0 1 8 4.500L9 15z" fill="#dba0a4"/><path d="M4 16.300a4 4 0 0 1-.5-7.800C5.500 8 7 8.500 8.500 9.500L19 15c-.8 1-1.500 1.300-2.500 1.300z" fill="#e9c9cb"/><path d="M2.500 16c2-4.500 6-6 9-4.500 1.500-1.500 8-1.500 8.500 2 0 1.800-1.500 2.800-3 2.800H4z" fill="#fff"/></svg></div>
        <div class="cell">${line(svg`<rect x=".8" y="3" width="18.400" height="13.500" rx="2"/><path d="M4.500 7h.1M8 7h.1M11.500 7h.1M15 7h.1M6 10h.1M9.500 10h.1M13 10h.1M5 13.200h10"/>`, "1.5")}</div>
        <div class="lang"><div>ENG</div><div>IN</div></div>
        <div class="cell narrow">${line(svg`<path d="M1 8a12.500 12.500 0 0 1 18 0M3.800 11a8.700 8.700 0 0 1 12.400 0M6.600 13.700a4.800 4.800 0 0 1 6.800 0"/><circle cx="10" cy="15.800" r="1.1" fill="#fff" stroke-width="1"/>`)}</div>
        <div class="cell narrow">${line(svg`<path d="M.8 8h3l4.500-4.200v13L3.800 12.500h-3zM12.500 7.500l6 6M18.500 7.500l-6 6"/>`, "1.5")}</div>
        <div class="cell narrow">${line(svg`<rect x=".3" y="4.200" width="16.500" height="12" rx="2.5"/><path d="M19 8.500v3.400" stroke-width="2"/><rect x="2.800" y="6.800" width="3" height="6.900" rx=".5" fill="#fff" stroke="none"/>`, "1.5")}</div>
        <div class="clock"><div class="time">${this.clock}</div><div>09-10-2024</div></div>
        <div class="cell narrow"><svg viewBox="0 0 20 20"><path d="M3.500 12.500V8a6 6 0 0 1 6-6.200c2 0 3.500.6 4.500 1.700V8.500h2v4l1.700 2.500v1H2v-1zM7 17h5.400a2.700 2.700 0 0 1-5.400 0z" fill="#fff"/><path d="M7 6.800h4L7.300 11.300h4" fill="none" stroke="#9e0912" stroke-width="1.1"/><path d="M12.800 1.300h4.500l-4 5.200h4.500" fill="none" stroke="#9e0912" stroke-width="3.200"/><path d="M13.200 1.500h4.700L14 6.500h4.500" fill="none" stroke="#fff" stroke-width="1.5"/></svg></div>
        <svg class="copilot" viewBox="0 0 30 30"><defs><linearGradient id="c1" x2="0" y2="1"><stop stop-color="#1a8ae8"/><stop offset=".5" stop-color="#30bd8f"/><stop offset="1" stop-color="#f0d221"/></linearGradient><linearGradient id="c2" x2="0" y2="1"><stop stop-color="#9b55f0"/><stop offset=".6" stop-color="#ee5d9c"/><stop offset="1" stop-color="#fb923c"/></linearGradient></defs><path d="M9 2h12l-6 17c-.5 1.500-1.500 2-3 2H3c-2 0-3-1.500-2.300-4L5 4.500C5.600 2.700 7 2 9 2z" fill="url(#c1)"/><path d="M14 2h5c2 0 2.500 1.500 3 4l.5 2h-3c-2 0-3 1-3.500 3L14 16z" fill="#1c4fd0"/><path d="M21 8h5c2.500 0 3.500 2 3 4.500L26 24H14l4-13c.5-2 1.500-3 3-3z" fill="url(#c2)"/><rect x="7" y="21" width="23" height="9" rx="2.5" fill="#f6c50e"/><text class="pre" x="18.700" y="28" text-anchor="middle">PRE</text></svg>
      </div>`;
  }
}

@customElement("app-root")
class AppRoot extends LitElement {
  static styles = css`
    :host { display: grid; grid-template-rows: 50px 59px minmax(0, 1fr) 60px; width: 1920px; height: 1080px; overflow: hidden; }
  `;
  render() {
    return html`<tab-strip></tab-strip><browser-toolbar></browser-toolbar><gradio-page></gradio-page><task-bar></task-bar>`;
  }
}
